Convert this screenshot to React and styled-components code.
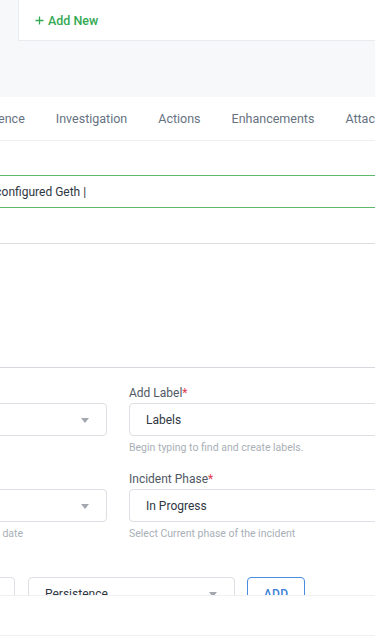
import React from 'react';
import styled, { createGlobalStyle } from 'styled-components';

const Global = createGlobalStyle`
  html, body {
    margin: 0;
    padding: 0;
    height: 100%;
    overflow: hidden;
    background: #f7f8fa;
    font-family: Roboto, "Liberation Sans", Arial, sans-serif;
  }
  * { box-sizing: border-box; }
`;

const TopCard = styled.div`
  margin-left: 18px;
  height: 41px;
  background: #fff;
  border-left: 1px solid #e9ebee;
  border-bottom: 1px solid #e9ebee;
  display: flex;
  align-items: center;
  padding-left: 16px;
`;

const AddNew = styled.button`
  border: 0;
  background: none;
  padding: 0;
  display: flex;
  align-items: center;
  gap: 4px;
  color: #34a853;
  font-family: inherit;
  font-size: 12.5px;
  font-weight: 500;
  cursor: pointer;
`;

const Panel = styled.div`
  margin-top: 56px;
  background: #fff;
  height: calc(100vh - 97px);
  overflow: hidden;
`;

const TabBar = styled.div`
  height: 44px;
  border-bottom: 1px solid #eceef1;
  overflow: hidden;
`;

const TabList = styled.div`
  display: flex;
  align-items: center;
  height: 100%;
  gap: 31px;
  margin-left: -25px;
  white-space: nowrap;
`;

const Tab = styled.span`
  font-size: 12.5px;
  color: #667281;
  padding-bottom: 1px;
`;

const Body = styled.div`
  margin-left: -141px;
  width: 540px;
  padding-top: 34px;
  display: flex;
  flex-direction: column;
`;

const TitleInput = styled.div`
  height: 33px;
  border: 1px solid #5cb96b;
  border-radius: 4px;
  display: flex;
  align-items: center;
  padding-left: 19px;
  font-size: 12px;
  color: #2f3742;
  white-space: nowrap;
`;

const Editor = styled.div`
  margin-top: 35px;
  height: 125px;
  border-top: 1px solid #dcdee2;
  border-bottom: 1px solid #d6d8dd;
`;

const Grid = styled.div`
  margin-top: 18px;
  display: grid;
  grid-template-columns: 248px 1fr;
  column-gap: 22px;
  row-gap: 18px;
`;

const Field = styled.div`
  display: flex;
  flex-direction: column;
`;

const Label = styled.label`
  font-size: 12px;
  line-height: 14px;
  color: #4f5863;
  margin-bottom: 3px;
  white-space: nowrap;
`;

const Req = styled.span`
  color: #e0394a;
`;

const Box = styled.div`
  height: 33px;
  border: 1px solid #dcdfe3;
  border-radius: 4px;
  display: flex;
  align-items: center;
  justify-content: space-between;
  padding: 0 17px 0 16px;
  font-size: 12px;
  color: #2f3742;
  white-space: nowrap;
  overflow: hidden;
  ${(p) => p.$width && `width: ${p.$width}px; flex: none;`}
  ${(p) => p.$gap && `margin-left: ${p.$gap}px;`}
`;

const Caret = styled.span`
  width: 0;
  height: 0;
  border-left: 4.5px solid transparent;
  border-right: 4.5px solid transparent;
  border-top: 5px solid #a3a8ae;
  margin-top: 1px;
`;

const Help = styled.div`
  margin-top: 6px;
  font-size: 10.5px;
  line-height: 12px;
  color: #a9afb7;
  white-space: nowrap;
`;

const ActionRow = styled.div`
  margin-top: 37px;
  display: flex;
  align-items: center;
`;

const AddButton = styled.button`
  width: 58px;
  height: 33px;
  margin-left: 12px;
  border: 1px solid #4a8ee0;
  border-radius: 4px;
  background: #fff;
  color: #3a7fd5;
  font-family: inherit;
  font-size: 12px;
  font-weight: 500;
  letter-spacing: 0.3px;
`;

const Footer = styled.div`
  position: fixed;
  left: 0;
  right: 0;
  bottom: 0;
  height: 41px;
  background: #fff;
  border-top: 1px solid #f0f1f3;
  border-bottom: 1px solid #f0f1f3;
`;

const PlusIcon = () => (
  <svg width="9" height="9" viewBox="0 0 9 9">
    <path d="M4.5 0.5v8M0.5 4.5h8" stroke="#34a853" strokeWidth="1.3" fill="none" />
  </svg>
);

const tabs = ['Evidence', 'Investigation', 'Actions', 'Enhancements', 'Attachments'];

export default function App() {
  return (
    <>
      <Global />
      <TopCard>
        <AddNew>
          <PlusIcon />
          Add New
        </AddNew>
      </TopCard>
      <Panel>
        <TabBar>
          <TabList>
            {tabs.map((t) => (
              <Tab key={t}>{t}</Tab>
            ))}
          </TabList>
        </TabBar>
        <Body>
          <TitleInput>Funds drained via misconfigured Geth |</TitleInput>
          <Editor />
          <Grid>
            <Field>
              <Label>Severity<Req>*</Req></Label>
              <Box>
                <span>High</span>
                <Caret />
              </Box>
              <Help>&nbsp;</Help>
            </Field>
            <Field>
              <Label>Add Label<Req>*</Req></Label>
              <Box>Labels</Box>
              <Help>Begin typing to find and create labels.</Help>
            </Field>
            <Field>
              <Label>Date<Req>*</Req></Label>
              <Box>
                <span>Today</span>
                <Caret />
              </Box>
              <Help>Select the incident occurrence date</Help>
            </Field>
            <Field>
              <Label>Incident Phase<Req>*</Req></Label>
              <Box>In Progress</Box>
              <Help>Select Current phase of the incident</Help>
            </Field>
          </Grid>
          <ActionRow>
            <Box $width={156} />
            <Box $width={207} $gap={13}>
              <span>Persistence</span>
              <Caret />
            </Box>
            <AddButton>ADD</AddButton>
          </ActionRow>
        </Body>
      </Panel>
      <Footer />
    </>
  );
}
